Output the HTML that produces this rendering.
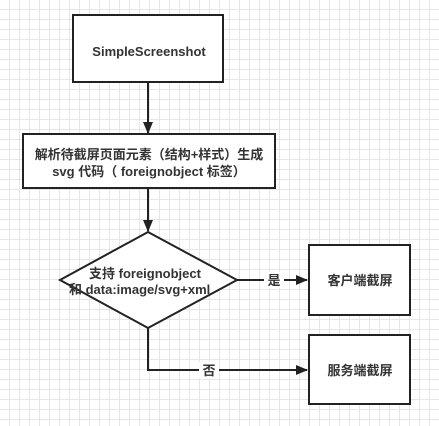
<!DOCTYPE html>
<html><head><meta charset="utf-8"><style>
body{margin:0;width:439px;height:426px;overflow:hidden;background:#fff;
background-image:linear-gradient(#e6e6e6 1px,transparent 1px),linear-gradient(90deg,#e6e6e6 1px,transparent 1px);background-size:10px 10px;background-position:-1px -1px}
svg{position:absolute;left:0;top:0}
text{font-family:"Liberation Sans","Noto Sans CJK SC",sans-serif;font-weight:bold;font-size:13px;fill:#333}
</style></head><body>
<svg width="439" height="426">
<defs><marker id="a" markerWidth="12" markerHeight="12" refX="11" refY="5" orient="auto" markerUnits="userSpaceOnUse"><path d="M0,0 L12,5 L0,10 Z" fill="#222"/></marker></defs>
<g stroke="#222" stroke-width="2" fill="#fff">
<rect x="73" y="15" width="150" height="67"/>
<rect x="23" y="134" width="252" height="54"/>
<polygon points="148,232 237,280 148,328 60,280"/>
<rect x="309" y="245" width="101" height="70"/>
<rect x="309" y="335" width="101" height="69"/>
</g>
<g stroke="#222" stroke-width="2" fill="none">
<line x1="148" y1="82" x2="148" y2="133" marker-end="url(#a)"/>
<line x1="148" y1="188" x2="148" y2="231" marker-end="url(#a)"/>
<line x1="237" y1="280" x2="307" y2="280" marker-end="url(#a)"/>
<polyline points="148,328 148,370 307,370" marker-end="url(#a)"/>
</g>
<rect x="264" y="272" width="20" height="16" fill="#fff"/>
<rect x="199" y="362" width="20" height="16" fill="#fff"/>
<text x="149" y="56" text-anchor="middle">SimpleScreenshot</text>
<text x="149" y="159" text-anchor="middle">解析待截屏页面元素（结构+样式）生成</text>
<text x="149" y="176" text-anchor="middle">svg 代码（ foreignobject 标签）</text>
<text x="89" y="278">支持 foreignobject</text>
<text x="69" y="294">和  data:image/svg+xml</text>
<text x="274" y="285" text-anchor="middle">是</text>
<text x="209" y="375" text-anchor="middle">否</text>
<text x="360" y="285" text-anchor="middle">客户端截屏</text>
<text x="360" y="375" text-anchor="middle">服务端截屏</text>
</svg>
</body></html>
